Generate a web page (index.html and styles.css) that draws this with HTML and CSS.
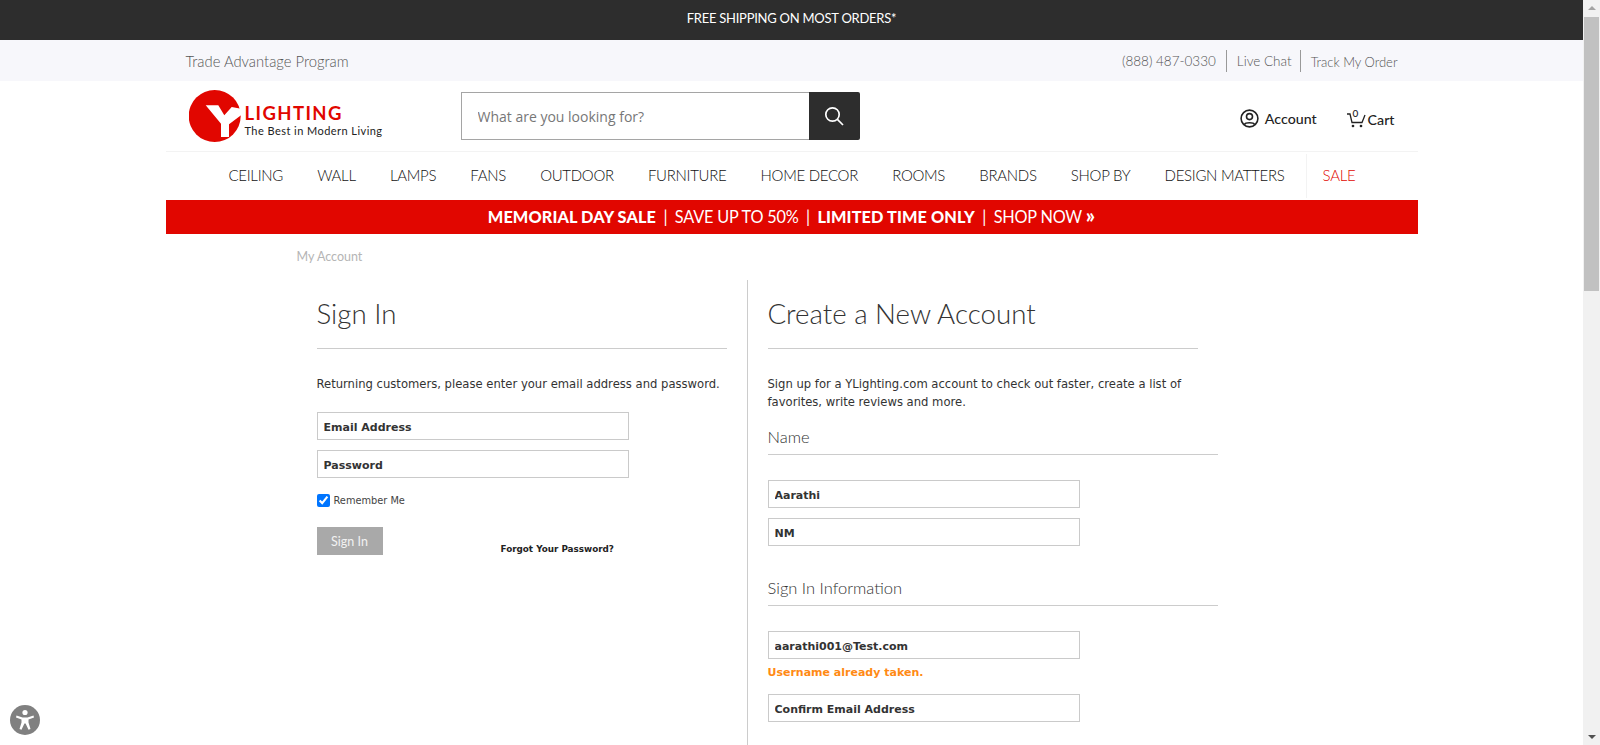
FILE: index.html
```html
<!DOCTYPE html>
<html lang="en">
<head>
    <meta charset="UTF-8">
    <title>My Account</title>
    <link rel="stylesheet" href="styles.css">
</head>
<body>
<div class="shell">
    <div class="page">
        <div class="promo">FREE SHIPPING ON MOST ORDERS*</div>

        <div class="utility">
            <div class="wrap utility-row">
                <a class="trade">Trade Advantage Program</a>
                <div class="utility-links">
                    <a>(888) 487-0330</a>
                    <a class="chat">Live Chat</a>
                    <a class="track">Track My Order</a>
                </div>
            </div>
        </div>

        <div class="wrap">
            <!-- Logo, search, account -->
            <header class="masthead">
                <a class="logo">
                    <svg class="logo-mark" width="52" height="52" viewBox="0 0 52 52">
                        <circle cx="25.7" cy="26" r="26" fill="#e10600"/>
                        <path d="M16.7 15.3H29.3L35.3 25.3L42.7 17L52 18.7V25.3L40 34.3V47H32V33.7Z" fill="#fff"/>
                    </svg>
                    <span class="logo-text">
                        <span class="logo-name">LIGHTING</span>
                        <span class="logo-tag">The Best in Modern Living</span>
                    </span>
                </a>
                <form class="search">
                    <input type="text" placeholder="What are you looking for?">
                    <button type="button" aria-label="Search">
                        <svg width="20" height="20" viewBox="0 0 20 20" fill="none" stroke="#fff" stroke-width="1.7">
                            <circle cx="8.5" cy="8.5" r="6.7"/>
                            <path d="M13.4 13.4L19 19"/>
                        </svg>
                    </button>
                </form>
                <div class="tools">
                    <a class="tool">
                        <svg width="19" height="19" viewBox="0 0 19 19" fill="none" stroke="#222" stroke-width="1.6">
                            <circle cx="9.5" cy="9.5" r="8.4"/>
                            <circle cx="9.5" cy="7.6" r="3"/>
                            <path d="M4.4 15.6C5.4 13.2 13.6 13.2 14.6 15.6"/>
                        </svg>
                        Account
                    </a>
                    <a class="tool cart">
                        <span class="cart-icon">
                            <svg width="19" height="18" viewBox="0 0 19 18" fill="none" stroke="#222" stroke-width="1.3">
                                <path d="M0 4H3L5 12.5H15L18 5"/>
                                <circle cx="6" cy="16" r=".7"/>
                                <circle cx="14" cy="16" r=".7"/>
                            </svg>
                            <span class="cart-count">0</span>
                        </span>
                        Cart
                    </a>
                </div>
            </header>

            <nav class="nav">
                <a>CEILING</a>
                <a>WALL</a>
                <a>LAMPS</a>
                <a>FANS</a>
                <a>OUTDOOR</a>
                <a>FURNITURE</a>
                <a>HOME DECOR</a>
                <a>ROOMS</a>
                <a>BRANDS</a>
                <a>SHOP BY</a>
                <a>DESIGN MATTERS</a>
                <a class="sale">SALE</a>
            </nav>

            <div class="banner">
                <b>MEMORIAL DAY SALE</b>
                <span class="bar">|</span>
                SAVE UP TO 50%
                <span class="bar">|</span>
                <b>LIMITED TIME ONLY</b>
                <span class="bar">|</span>
                SHOP NOW
                <b class="arrows">»</b>
            </div>
        </div>

        <main class="content">
            <div class="crumb">My Account</div>
            <div class="columns">
                <!-- Sign in -->
                <section class="col col-left">
                    <h1>Sign In</h1>
                    <p class="intro">Returning customers, please enter your email address and password.</p>
                    <div class="fields">
                        <input class="field" type="text" placeholder="Email Address">
                        <input class="field" type="password" placeholder="Password">
                    </div>
                    <label class="remember"><input type="checkbox" checked> Remember Me</label>
                    <div class="actions">
                        <button class="signin" type="button">Sign In</button>
                        <a class="forgot">Forgot Your Password?</a>
                    </div>
                </section>

                <!-- Create account -->
                <section class="col col-right">
                    <h1>Create a New Account</h1>
                    <p class="intro">Sign up for a YLighting.com account to check out faster, create a list of favorites, write reviews and more.</p>
                    <h2>Name</h2>
                    <div class="fields">
                        <input class="field" type="text" value="Aarathi">
                        <input class="field" type="text" value="NM">
                    </div>
                    <h2 class="spaced">Sign In Information</h2>
                    <div class="fields">
                        <input class="field" type="text" value="aarathi001@Test.com">
                    </div>
                    <div class="error">Username already taken.</div>
                    <input class="field" type="text" placeholder="Confirm Email Address">
                </section>
            </div>
        </main>

        <a class="access" aria-label="Accessibility">
            <svg width="30" height="30" viewBox="0 0 30 30">
                <circle cx="15" cy="15" r="15" fill="#808080"/>
                <circle cx="15" cy="7.5" r="2.6" fill="#fff"/>
                <path d="M6.5 10.5L12.5 12.5H17.5L23.5 10.5L24 12.4L18.5 14.5V17.5L20.5 24L18.5 24.7L15.6 18.5H14.4L11.5 24.7L9.5 24L11.5 17.5V14.5L6 12.4Z" fill="#fff"/>
            </svg>
        </a>
    </div>

    <div class="scrollbar">
        <span class="arrow-up"></span>
        <span class="thumb"></span>
        <span class="arrow-down"></span>
    </div>
</div>
</body>
</html>
```

FILE: styles.css
```css
* {
    box-sizing: border-box;
}

html, body {
    height: 100%;
    margin: 0;
    overflow: hidden;
}

body {
    font-family: "DejaVu Sans", Verdana, sans-serif;
    color: #333;
    background: #fff;
}

.shell {
    display: flex;
    height: 745px;
}

.page {
    position: relative;
    flex: 1;
    min-width: 0;
    height: 745px;
    overflow: hidden;
}

.wrap {
    width: 1252px;
    margin: 0 auto;
}

.promo {
    height: 40px;
    line-height: 37px;
    background: #2d2d2d;
    color: #fff;
    font-family: Lato, sans-serif;
    font-size: 13px;
    letter-spacing: -0.25px;
    text-align: center;
}

/* Utility bar */
.utility {
    height: 41px;
    background: #f7f7fb;
    font-family: Lato, sans-serif;
    color: #555;
}

.utility-row {
    display: flex;
    justify-content: space-between;
    align-items: center;
    height: 41px;
    padding: 0 20px;
}

.trade {
    font-size: 14.8px;
    font-weight: 300;
}

.utility-links {
    display: flex;
    align-items: center;
    font-size: 13.5px;
    font-weight: 300;
}

.utility-links a {
    line-height: 22px;
}

.chat, .track {
    margin-left: 10px;
    padding-left: 10px;
    border-left: 1px solid #999;
}

.utility-links .track {
    height: 22px;
    margin-left: 8px;
    font-size: 13px;
    line-height: 24px;
}

/* Masthead */
.masthead {
    display: flex;
    align-items: center;
    height: 71px;
    padding: 0 23px;
    border-bottom: 1px solid #f3f3f3;
}

.logo {
    display: flex;
    flex: 0 0 272px;
    align-items: flex-start;
}

.logo-mark {
    flex: none;
}

.logo-text {
    display: flex;
    flex-direction: column;
    margin-left: 4px;
    padding-top: 13px;
}

.logo-name {
    color: #e10600;
    font-family: Lato, sans-serif;
    font-size: 18.5px;
    font-weight: 700;
    letter-spacing: 1.4px;
    line-height: 20px;
}

.logo-tag {
    margin-top: 1px;
    color: #222;
    font-family: Lato, sans-serif;
    font-size: 11px;
    font-weight: 400;
    letter-spacing: 0.45px;
    line-height: 14px;
    white-space: nowrap;
}

.search {
    display: flex;
    width: 399px;
    height: 48px;
    margin: 0;
}

.search input {
    flex: 1;
    min-width: 0;
    padding: 0 16px;
    border: 1px solid #a5a5a5;
    border-right: 0;
    border-radius: 0;
    font-family: "Open Sans", sans-serif;
    font-size: 14px;
    outline: 0;
}

.search input::placeholder {
    color: #777;
    opacity: 1;
}

.search button {
    display: flex;
    justify-content: center;
    align-items: center;
    width: 51px;
    border: 0;
    border-radius: 0 2px 2px 0;
    background: #2d2d2d;
}

.tools {
    display: flex;
    align-items: center;
    margin-left: auto;
    padding-top: 4px;
    font-family: Lato, sans-serif;
    font-size: 14.2px;
    font-weight: 500;
    color: #222;
}

.tool {
    display: flex;
    align-items: center;
    gap: 6px;
}

.cart {
    gap: 2px;
    margin-left: 30px;
    padding-top: 2px;
}

.cart-icon {
    position: relative;
    display: block;
    width: 19px;
    height: 18px;
}

.cart-icon svg {
    display: block;
}

.cart-count {
    position: absolute;
    top: -3px;
    left: 6px;
    font-size: 10px;
    line-height: 12px;
}

/* Main nav */
.nav {
    display: flex;
    align-items: center;
    gap: 34.2px;
    height: 48px;
    padding: 0 0 2px 63px;
    font-family: Lato, sans-serif;
    font-size: 15px;
    font-weight: 300;
    letter-spacing: -0.3px;
    color: #111;
}

.sale {
    display: flex;
    align-items: center;
    height: 44px;
    margin: 0 0 -2px -13px;
    padding: 0 0 2px 16px;
    border-left: 1px solid #f3f3f3;
    color: #e10600;
}

.banner {
    height: 34px;
    line-height: 33px;
    background: #e10600;
    color: #fff;
    font-family: Lato, sans-serif;
    font-size: 16.3px;
    font-weight: 400;
    letter-spacing: -0.2px;
    text-align: center;
}

.banner b {
    font-weight: 900;
    letter-spacing: 0.1px;
}

.bar {
    margin: 0 3.5px;
    font-weight: 400;
}

.arrows {
    font-size: 20px;
    line-height: 1;
}

/* Account forms */
.content {
    width: 990px;
    margin: 0 auto;
}

.crumb {
    height: 46px;
    padding-top: 15px;
    font-family: Lato, sans-serif;
    font-size: 12.5px;
    line-height: 16px;
    color: #b5b5b5;
}

.columns {
    display: flex;
    height: 470px;
}

.col-left {
    width: 451px;
    padding: 0 20px;
    border-right: 1px solid #ccc;
}

.col-right {
    width: 470px;
    padding-left: 20px;
}

h1 {
    margin: 0;
    height: 69px;
    border-bottom: 1px solid #ccc;
    font-family: Lato, sans-serif;
    font-size: 27.7px;
    font-weight: 300;
    line-height: 68px;
    color: #333;
}

.col-right h1 {
    width: 430px;
}

h2 {
    margin: 10px 0 25px;
    height: 34px;
    border-bottom: 1px solid #ccc;
    font-family: Lato, sans-serif;
    font-size: 16.5px;
    font-weight: 300;
    line-height: 32px;
    color: #333;
}

h2.spaced {
    margin-top: 26px;
}

.intro {
    margin: 26px 0 0;
    font-size: 11.6px;
    line-height: 18px;
    color: #333;
}

.col-left .fields {
    margin-top: 19px;
}

.fields {
    display: flex;
    flex-direction: column;
    gap: 10px;
}

.field {
    display: block;
    width: 312px;
    height: 28px;
    padding: 3px 6px 0;
    border: 1px solid #cacaca;
    border-radius: 0;
    background: #fff;
    font-family: "DejaVu Sans", Verdana, sans-serif;
    font-size: 11px;
    font-weight: 700;
    color: #333;
    outline: 0;
}

.field::placeholder {
    color: #333;
    opacity: 1;
}

.remember {
    display: flex;
    align-items: center;
    gap: 4px;
    height: 16px;
    margin-top: 14px;
    font-size: 9.8px;
    color: #444;
}

.remember input {
    width: 13px;
    height: 13px;
    margin: 0;
    accent-color: #0075ff;
}

.actions {
    display: flex;
    align-items: flex-end;
    margin-top: 19px;
}

.signin {
    width: 66px;
    height: 28px;
    padding: 0;
    border: 0;
    border-radius: 0;
    background: #a9a9a9;
    color: #f2f2f2;
    font-family: Lato, sans-serif;
    font-size: 12.5px;
}

.forgot {
    margin-left: 118px;
    font-size: 8.8px;
    font-weight: 700;
    line-height: 12px;
    color: #222;
}

.error {
    height: 35px;
    padding-top: 6px;
    font-size: 11px;
    font-weight: 700;
    line-height: 15px;
    color: #ff8a14;
}

/* Accessibility button */
.access {
    position: absolute;
    left: 10px;
    top: 705px;
    display: block;
    width: 30px;
    height: 30px;
}

.access svg {
    display: block;
}

/* Scrollbar */
.scrollbar {
    display: flex;
    flex: 0 0 17px;
    flex-direction: column;
    align-items: center;
    height: 745px;
    background: #f1f1f1;
}

.arrow-up, .arrow-down {
    flex: none;
    width: 0;
    height: 0;
    border-left: 4px solid transparent;
    border-right: 4px solid transparent;
}

.arrow-up {
    margin: 6px 0 7px;
    border-bottom: 4px solid #a3a3a3;
}

.arrow-down {
    margin: auto 0 6px;
    border-top: 4px solid #505050;
}

.thumb {
    flex: none;
    width: 15px;
    height: 274px;
    background: #c1c1c1;
}
```
